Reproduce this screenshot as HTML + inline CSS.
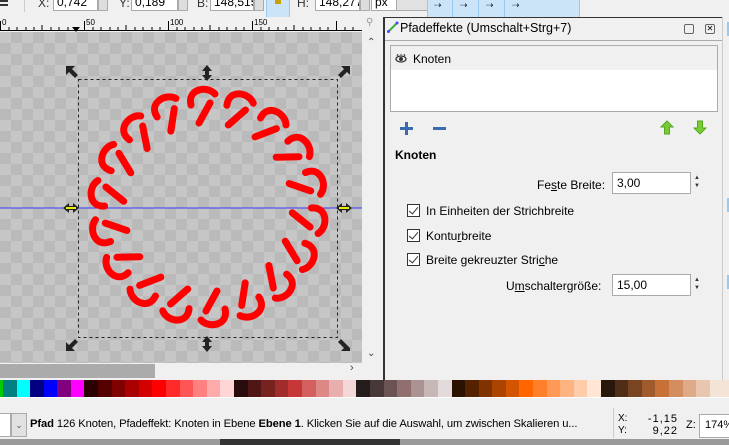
<!DOCTYPE html>
<html><head><meta charset="utf-8"><style>
*{margin:0;padding:0;box-sizing:border-box}
body{width:729px;height:445px;overflow:hidden;background:#f0f0f0;font-family:"Liberation Sans",sans-serif;font-size:12px;color:#000;position:relative}
.a{position:absolute}
.inp{background:#fff;border:1px solid #aaa}
.cb{width:13px;height:13px;border:1px solid #333;background:#fff;position:absolute}
.cb:after{content:"";position:absolute;left:3px;top:0px;width:4px;height:8px;border:solid #333;border-width:0 1.5px 1.5px 0;transform:rotate(40deg)}
</style></head><body>
<div class="a" style="left:0;top:0;width:8px;height:6px;border-top:2px solid #333;border-bottom:2px solid #333"></div>
<div class="a" style="left:24px;top:0;width:1px;height:12px;background:#ccc"></div>
<div class="a" style="left:38px;top:-4px;color:#333">X:</div>
<div class="a inp" style="left:53px;top:-4px;width:45px;height:15px;padding-left:3px;line-height:11px">0,742</div>
<div class="a" style="left:98px;top:-4px;width:10px;height:15px;background:#ddd;border:1px solid #aaa"></div>
<div class="a" style="left:119px;top:-4px;color:#333">Y:</div>
<div class="a inp" style="left:131px;top:-4px;width:47px;height:15px;padding-left:3px;line-height:11px">0,189</div>
<div class="a" style="left:178px;top:-4px;width:10px;height:15px;background:#ddd;border:1px solid #aaa"></div>
<div class="a" style="left:197px;top:-4px;color:#333">B:</div>
<div class="a inp" style="left:210px;top:-4px;width:44px;height:15px;padding-left:3px;line-height:11px;overflow:hidden">148,515</div>
<div class="a" style="left:254px;top:-4px;width:10px;height:15px;background:#ddd;border:1px solid #aaa"></div>
<div class="a" style="left:266px;top:-2px;width:24px;height:20px;background:#cce4f7;border:1px solid #99c9ef"></div>
<div class="a" style="left:275px;top:0;width:6px;height:4px;background:#c8a000"></div>
<div class="a" style="left:297px;top:-4px;color:#333">H:</div>
<div class="a inp" style="left:315px;top:-4px;width:45px;height:15px;padding-left:3px;line-height:11px;overflow:hidden">148,277</div>
<div class="a" style="left:360px;top:-4px;width:10px;height:15px;background:#ddd;border:1px solid #aaa"></div>
<div class="a inp" style="left:371px;top:-4px;width:60px;height:15px;padding-left:3px;line-height:11px">px</div>
<div class="a" style="left:396px;top:-4px;width:35px;height:15px;background:#e1e1e1;border:1px solid #aaa"></div>
<div class="a" style="left:427px;top:-2px;width:153px;height:20px;background:#cce4f7;border:1px solid #99c9ef"></div>
<div class="a" style="left:452px;top:-2px;width:1px;height:20px;background:#99c9ef"></div>
<div class="a" style="left:478px;top:-2px;width:1px;height:20px;background:#99c9ef"></div>
<div class="a" style="left:504px;top:-2px;width:1px;height:20px;background:#99c9ef"></div>
<div class="a" style="left:434px;top:0;font-size:9px;color:#224">⇢</div>
<div class="a" style="left:460px;top:0;font-size:9px;color:#224">⇢</div>
<div class="a" style="left:486px;top:0;font-size:9px;color:#224">⇢</div>
<div class="a" style="left:512px;top:0;font-size:9px;color:#224">⇢</div>

<div class="a" style="left:0;top:17px;width:362px;height:14px;background:#f0f0f0;border-bottom:1px solid #000"></div>
<svg class="a" style="left:0;top:17px" width="362" height="15">
<g stroke="#000" stroke-width="1">
<path d="M0.5 4V14M84.5 4V14M168.5 4V14M252.5 4V14M336.5 4V14"/>
<path d="M9 10V14M17 10V14M26 10V14M34 10V14M42 8V14M51 10V14M59 10V14M68 10V14M76 10V14M93 10V14M101 10V14M110 10V14M118 10V14M126 8V14M135 10V14M143 10V14M152 10V14M160 10V14M177 10V14M185 10V14M194 10V14M202 10V14M210 8V14M219 10V14M227 10V14M236 10V14M244 10V14M261 10V14M269 10V14M278 10V14M286 10V14M294 8V14M303 10V14M311 10V14M320 10V14M328 10V14M345 10V14M353 10V14"/>
</g>
<path d="M72 10L80 10L76 15Z" fill="#000"/>
<g font-size="8" font-family="Liberation Sans" fill="#000"><text x="2" y="8">0</text><text x="86" y="8">50</text><text x="170" y="8">100</text><text x="254" y="8">150</text></g>
</svg>
<div class="a" style="left:362px;top:17px;width:22px;height:346px;background:#f0f0f0"></div>
<div class="a" style="left:366px;top:17px;font-size:10px;color:#999">⚲</div>
<div class="a" style="left:367px;top:37px;font-size:10px;color:#444">⌃</div>
<div class="a" style="left:367px;top:348px;font-size:10px;color:#444">⌄</div>

<div class="a" style="left:0;top:32px;width:362px;height:331px;background-color:#c6c6c6;background-image:linear-gradient(45deg,#bababa 25%,transparent 25%,transparent 75%,#bababa 75%),linear-gradient(45deg,#bababa 25%,transparent 25%,transparent 75%,#bababa 75%);background-size:22px 22px;background-position:0 0,11px 11px"></div>
<svg class="a" style="left:0;top:32px" width="362" height="331" viewBox="0 32 362 331">
<line x1="0" y1="208" x2="362" y2="208" stroke="#3b3bff" stroke-width="1"/>
<rect x="78.5" y="79.5" width="259" height="258" fill="none" stroke="#222" stroke-dasharray="3,3"/>
<g fill="#222">
<path d="M66 66l9 0-3 3 6 6-3 3-6-6-3 3z"/>
<path d="M350 66l-9 0 3 3-6 6 3 3 6-6 3 3z"/>
<path d="M66 351l9 0-3-3 6-6-3-3-6 6-3-3z"/>
<path d="M350 351l-9 0 3-3-6-6 3-3 6 6 3 3z"/>
<path d="M207 65l5 6h-3v4h3l-5 6-5-6h3v-4h-3z"/>
<path d="M207 336l5 6h-3v4h3l-5 6-5-6h3v-4h-3z"/>
<path d="M63 208l6-5v3h4v-3l6 5-6 5v-3h-4v3z"/>
<path d="M336 208l6-5v3h4v-3l6 5-6 5v-3h-4v3z"/>
</g>
<line x1="66" y1="208" x2="76" y2="208" stroke="#ee0" stroke-width="2"/>
<line x1="339" y1="208" x2="349" y2="208" stroke="#ee0" stroke-width="2"/>
<g transform="translate(208,207)" fill="none" stroke="#f00" stroke-width="7" stroke-linecap="round">
<g><path d="M-17 -102C-21 -118 -1 -122 7 -113"/><path d="M2 -104L-9 -84"/></g>
<g transform="rotate(20)"><path d="M-17 -102C-21 -118 -1 -122 7 -113"/><path d="M2 -104L-9 -84"/></g>
<g transform="rotate(40)"><path d="M-17 -102C-21 -118 -1 -122 7 -113"/><path d="M2 -104L-9 -84"/></g>
<g transform="rotate(60)"><path d="M-17 -102C-21 -118 -1 -122 7 -113"/><path d="M2 -104L-9 -84"/></g>
<g transform="rotate(80)"><path d="M-17 -102C-21 -118 -1 -122 7 -113"/><path d="M2 -104L-9 -84"/></g>
<g transform="rotate(100)"><path d="M-17 -102C-21 -118 -1 -122 7 -113"/><path d="M2 -104L-9 -84"/></g>
<g transform="rotate(120)"><path d="M-17 -102C-21 -118 -1 -122 7 -113"/><path d="M2 -104L-9 -84"/></g>
<g transform="rotate(140)"><path d="M-17 -102C-21 -118 -1 -122 7 -113"/><path d="M2 -104L-9 -84"/></g>
<g transform="rotate(160)"><path d="M-17 -102C-21 -118 -1 -122 7 -113"/><path d="M2 -104L-9 -84"/></g>
<g transform="rotate(180)"><path d="M-17 -102C-21 -118 -1 -122 7 -113"/><path d="M2 -104L-9 -84"/></g>
<g transform="rotate(200)"><path d="M-17 -102C-21 -118 -1 -122 7 -113"/><path d="M2 -104L-9 -84"/></g>
<g transform="rotate(220)"><path d="M-17 -102C-21 -118 -1 -122 7 -113"/><path d="M2 -104L-9 -84"/></g>
<g transform="rotate(240)"><path d="M-17 -102C-21 -118 -1 -122 7 -113"/><path d="M2 -104L-9 -84"/></g>
<g transform="rotate(260)"><path d="M-17 -102C-21 -118 -1 -122 7 -113"/><path d="M2 -104L-9 -84"/></g>
<g transform="rotate(280)"><path d="M-17 -102C-21 -118 -1 -122 7 -113"/><path d="M2 -104L-9 -84"/></g>
<g transform="rotate(300)"><path d="M-17 -102C-21 -118 -1 -122 7 -113"/><path d="M2 -104L-9 -84"/></g>
<g transform="rotate(320)"><path d="M-17 -102C-21 -118 -1 -122 7 -113"/><path d="M2 -104L-9 -84"/></g>
<g transform="rotate(340)"><path d="M-17 -102C-21 -118 -1 -122 7 -113"/><path d="M2 -104L-9 -84"/></g>
</g>
</svg>
<div class="a" style="left:0;top:363px;width:384px;height:16px;background:#f0f0f0"></div>
<div class="a" style="left:0;top:364px;width:155px;height:14px;background:#ababab"></div>
<div class="a" style="left:350px;top:362px;font-size:11px;color:#444">›</div>
<div class="a" style="left:383px;top:17px;width:2px;height:363px;background:#333"></div>
<div class="a" style="left:385px;top:17px;width:337px;height:1px;background:#333"></div>
<svg class="a" style="left:387px;top:21px" width="12" height="12"><path d="M1 11L10 2" stroke="#4a4" stroke-width="2"/><circle cx="1.5" cy="10.5" r="1.5" fill="#44f"/><circle cx="10" cy="2" r="1.5" fill="#44f"/></svg>
<div class="a" style="left:400px;top:21px;font-size:12.5px">Pfadeffekte (Umschalt+Strg+7)</div>
<div class="a" style="left:684px;top:24px;width:10px;height:10px;border:1px solid #666;border-radius:2px"></div>
<div class="a" style="left:705px;top:24px;width:10px;height:10px;border:1px solid #666;border-radius:2px;font-size:8px;line-height:8px;text-align:center">✕</div>
<div class="a" style="left:385px;top:40px;width:337px;height:1px;background:#aaa"></div>
<div class="a" style="left:390px;top:45px;width:328px;height:67px;background:#fff;border:1px solid #aaa"></div>
<div class="a" style="left:391px;top:46px;width:326px;height:24px;background:#f0f0f0"></div>
<svg class="a" style="left:395px;top:54px" width="12" height="9"><ellipse cx="6" cy="5" rx="5" ry="3" fill="none" stroke="#333" stroke-width="1.3"/><circle cx="6" cy="5" r="2" fill="#333"/><path d="M2 2L3 0M6 1V0M10 2L9 0" stroke="#333"/></svg>
<div class="a" style="left:413px;top:52px;font-size:12px">Knoten</div>
<div class="a" style="left:400px;top:127px;width:13px;height:3px;background:#3a6ab0"></div>
<div class="a" style="left:405px;top:122px;width:3px;height:13px;background:#3a6ab0"></div>
<div class="a" style="left:433px;top:127px;width:13px;height:3px;background:#3a6ab0"></div>
<svg class="a" style="left:660px;top:120px" width="14" height="15"><path d="M7 1L13 7H9.5V14H4.5V7H1Z" fill="#7c3" stroke="#5a2"/></svg>
<svg class="a" style="left:693px;top:120px" width="14" height="15"><path d="M7 14L13 8H9.5V1H4.5V8H1Z" fill="#7c3" stroke="#5a2"/></svg>
<div class="a" style="left:395px;top:148px;font-weight:bold;font-size:12px">Knoten</div>
<div class="a" style="left:537px;top:178px;font-size:12px">Fe<u>s</u>te Breite:</div>
<div class="a inp" style="left:612px;top:172px;width:79px;height:22px;padding:3px 0 0 4px">3,00</div>
<div class="a" style="left:694px;top:174px;width:8px;height:18px;font-size:6px;line-height:8px;color:#333">▲<br>▼</div>
<div class="cb" style="left:407px;top:204px"></div><div class="a" style="left:426px;top:204px">In Einheiten der Strichbreite</div>
<div class="cb" style="left:407px;top:229px"></div><div class="a" style="left:426px;top:229px">Kontu<u>r</u>breite</div>
<div class="cb" style="left:407px;top:253px"></div><div class="a" style="left:426px;top:253px">Breite gekreuzter Stri<u>c</u>he</div>
<div class="a" style="left:506px;top:279px">U<u>m</u>schaltergröße:</div>
<div class="a inp" style="left:612px;top:274px;width:79px;height:22px;padding:3px 0 0 4px">15,00</div>
<div class="a" style="left:694px;top:276px;width:8px;height:18px;font-size:6px;line-height:8px;color:#333">▲<br>▼</div>
<div class="a" style="left:722px;top:17px;width:7px;height:363px;background:#f0f0f0;border-left:1px solid #ccc"></div>
<div class="a" style="left:727px;top:22px;width:2px;height:14px;background:#99c9ef"></div>
<div class="a" style="left:727px;top:198px;width:2px;height:14px;background:#99c9ef"></div>
<div class="a" style="left:727px;top:275px;width:2px;height:14px;background:#99c9ef"></div>
<div class="a" style="left:0;top:380px;width:729px;height:17px;display:flex">
<span style="width:3px;background:#0c0"></span>
<span style="width:14px;background:#008080"></span><span style="width:14px;background:#0ff"></span><span style="width:14px;background:#000080"></span><span style="width:14px;background:#00f"></span><span style="width:14px;background:#800080"></span><span style="width:14px;background:#f0f"></span>
<span style="width:14px;background:#2b0000"></span><span style="width:14px;background:#500"></span><span style="width:14px;background:#800000"></span><span style="width:14px;background:#a00"></span><span style="width:14px;background:#d40000"></span><span style="width:14px;background:#f00"></span><span style="width:14px;background:#ff2a2a"></span><span style="width:14px;background:#f55"></span><span style="width:14px;background:#ff8080"></span><span style="width:14px;background:#faa"></span><span style="width:14px;background:#ffd5d5"></span>
<span style="width:14px;background:#280b0b"></span><span style="width:14px;background:#501616"></span><span style="width:14px;background:#782121"></span><span style="width:14px;background:#a02c2c"></span><span style="width:14px;background:#c83737"></span><span style="width:14px;background:#d35f5f"></span><span style="width:14px;background:#de8787"></span><span style="width:14px;background:#e9afaf"></span><span style="width:14px;background:#f4d7d7"></span>
<span style="width:14px;background:#241c1c"></span><span style="width:14px;background:#483737"></span><span style="width:14px;background:#6c5353"></span><span style="width:14px;background:#916f6f"></span><span style="width:14px;background:#ac9393"></span><span style="width:14px;background:#c8b7b7"></span><span style="width:14px;background:#e3dbdb"></span>
<span style="width:14px;background:#2b1100"></span><span style="width:14px;background:#520"></span><span style="width:14px;background:#803300"></span><span style="width:14px;background:#a40"></span><span style="width:14px;background:#d45500"></span><span style="width:14px;background:#f60"></span><span style="width:14px;background:#ff7f2a"></span><span style="width:14px;background:#f95"></span><span style="width:14px;background:#ffb380"></span><span style="width:14px;background:#fca"></span><span style="width:14px;background:#ffe6d5"></span>
<span style="width:14px;background:#28170b"></span><span style="width:14px;background:#502d16"></span><span style="width:14px;background:#784421"></span><span style="width:14px;background:#a05a2c"></span><span style="width:14px;background:#c87137"></span><span style="width:14px;background:#d38d5f"></span><span style="width:14px;background:#deaa87"></span><span style="width:14px;background:#e9c6af"></span><span style="width:20px;background:#f4e3d7"></span>
</div>
<div class="a" style="left:0;top:397px;width:729px;height:1px;background:#fff"></div>
<div class="a" style="left:0;top:413px;width:11px;height:24px;background:#fff;border:1px solid #aaa;border-left:none"></div>
<div class="a" style="left:11px;top:413px;width:16px;height:24px;background:#e1e1e1;border:1px solid #aaa;font-size:9px;text-align:center;line-height:22px;color:#555">⌄</div>
<div class="a" style="left:30px;top:418px;font-size:11.2px;white-space:nowrap;letter-spacing:-0.1px"><b>Pfad</b> 126 Knoten, Pfadeffekt: Knoten in Ebene <b>Ebene 1</b>. Klicken Sie auf die Auswahl, um zwischen Skalieren u...</div>
<div class="a" style="left:613px;top:408px;width:1px;height:30px;background:#ccc"></div>
<div class="a" style="left:618px;top:413px;font-size:10px;line-height:12px">X:<br>Y:</div>
<div class="a" style="left:640px;top:413px;width:38px;font-size:11px;line-height:12px;text-align:right;letter-spacing:1px">-1,15<br>9,22</div>
<div class="a" style="left:686px;top:419px;font-size:11px">Z:</div>
<div class="a inp" style="left:699px;top:414px;width:40px;height:24px;padding:4px 0 0 5px;font-size:11px">174%</div>
<div class="a" style="left:0;top:439px;width:729px;height:6px;background:#9a9a9a"></div>
<div class="a" style="left:220px;top:439px;width:180px;height:6px;background:#333"></div>
</body></html>
